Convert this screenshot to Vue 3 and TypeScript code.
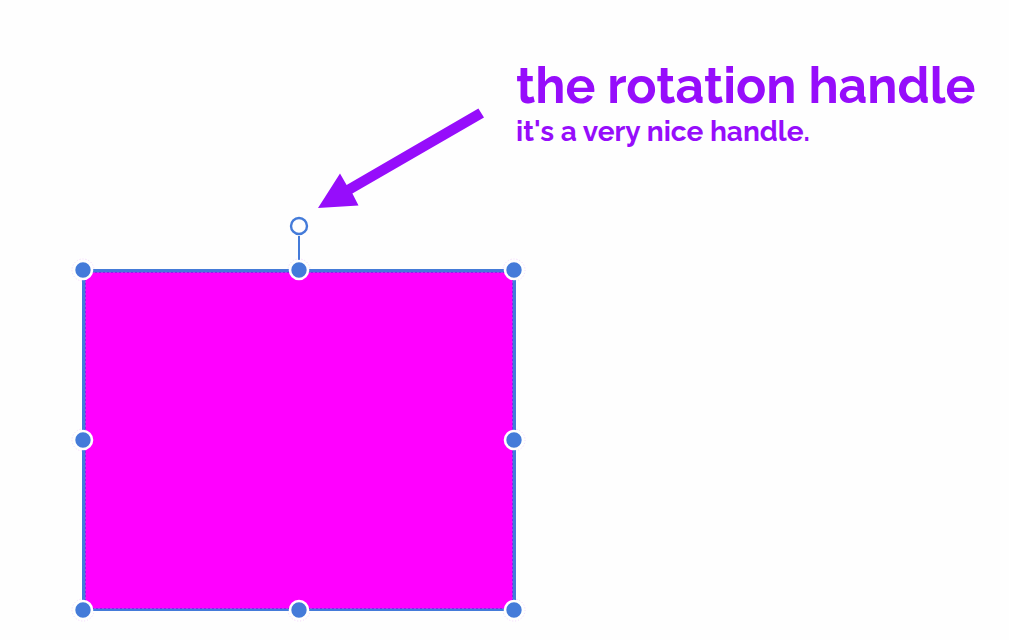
<script setup lang="ts">
interface Point {
  x: number
  y: number
}

const left = 83
const middle = 299
const right = 514
const top = 270
const centre = 440
const bottom = 610

const handles: Point[] = [
  { x: left, y: top },
  { x: middle, y: top },
  { x: right, y: top },
  { x: left, y: centre },
  { x: right, y: centre },
  { x: left, y: bottom },
  { x: middle, y: bottom },
  { x: right, y: bottom },
]
</script>

<template>
  <main class="canvas">
    <svg class="drawing" aria-label="Selected rectangle with a rotation handle" role="img">
      <circle v-for="(h, i) in handles" :key="i" class="halo" :cx="h.x" :cy="h.y" r="11" />
      <rect class="shape" x="83" y="270" width="431" height="340" />
      <rect class="inner" x="85.5" y="272.5" width="427" height="336" />
      <rect class="inner-dots" x="85.5" y="272.5" width="427" height="336" />
      <path class="outline" d="M83.5 610V270.5H514.5V610" />
      <path class="outline base" d="M83 610H515" />
      <path class="stem" d="M299 236V262" />
      <circle class="rotate" cx="299" cy="226" r="8" />
      <circle v-for="(h, i) in handles" :key="i" class="handle" :cx="h.x" :cy="h.y" r="9" />
      <path class="arrow" d="M478.4 108.6L484 117.4L352.4 193.6L358.5 205.5L318 208L340 173.5L346.6 185Z" />
    </svg>
    <header class="note">
      <h1>the rotation handle</h1>
      <p>it's a very nice handle.</p>
    </header>
  </main>
</template>

<style>
body {
  margin: 0;
  background: #fefefe;
}
</style>

<style scoped>
.canvas {
  position: relative;
  min-height: 100vh;
  overflow: hidden;
  background: #fefefe;
  color: #960dfb;
  font-family: Raleway, Lato, sans-serif;
}

.drawing {
  position: absolute;
  inset: 0;
  width: 100%;
  height: 100%;
}

.note {
  position: absolute;
  top: 56px;
  left: 516px;
  white-space: nowrap;
}

h1,
p {
  margin: 0;
  font-weight: 700;
}

h1 {
  font-size: 50px;
  line-height: 60px;
}

p {
  font-size: 28px;
  line-height: 32px;
}

.shape {
  fill: #ff00ff;
}

.inner {
  fill: none;
  stroke: #8a20ee;
}

.inner-dots {
  fill: none;
  stroke: #b77ae0;
  stroke-dasharray: 1 3;
}

.outline {
  fill: none;
  stroke: #447bd9;
  stroke-width: 3;
}

.base {
  stroke-width: 2;
}

.stem {
  stroke: #447bd9;
  stroke-width: 2;
}

.rotate {
  fill: #fefefe;
  stroke: #447bd9;
  stroke-width: 2.4;
}

.halo {
  fill: none;
  stroke: #f3d2fc;
  stroke-dasharray: 1 2;
}

.handle {
  fill: #447bd9;
  stroke: #fefefe;
  stroke-width: 2.6;
}

.arrow {
  fill: #960dfb;
}
</style>
